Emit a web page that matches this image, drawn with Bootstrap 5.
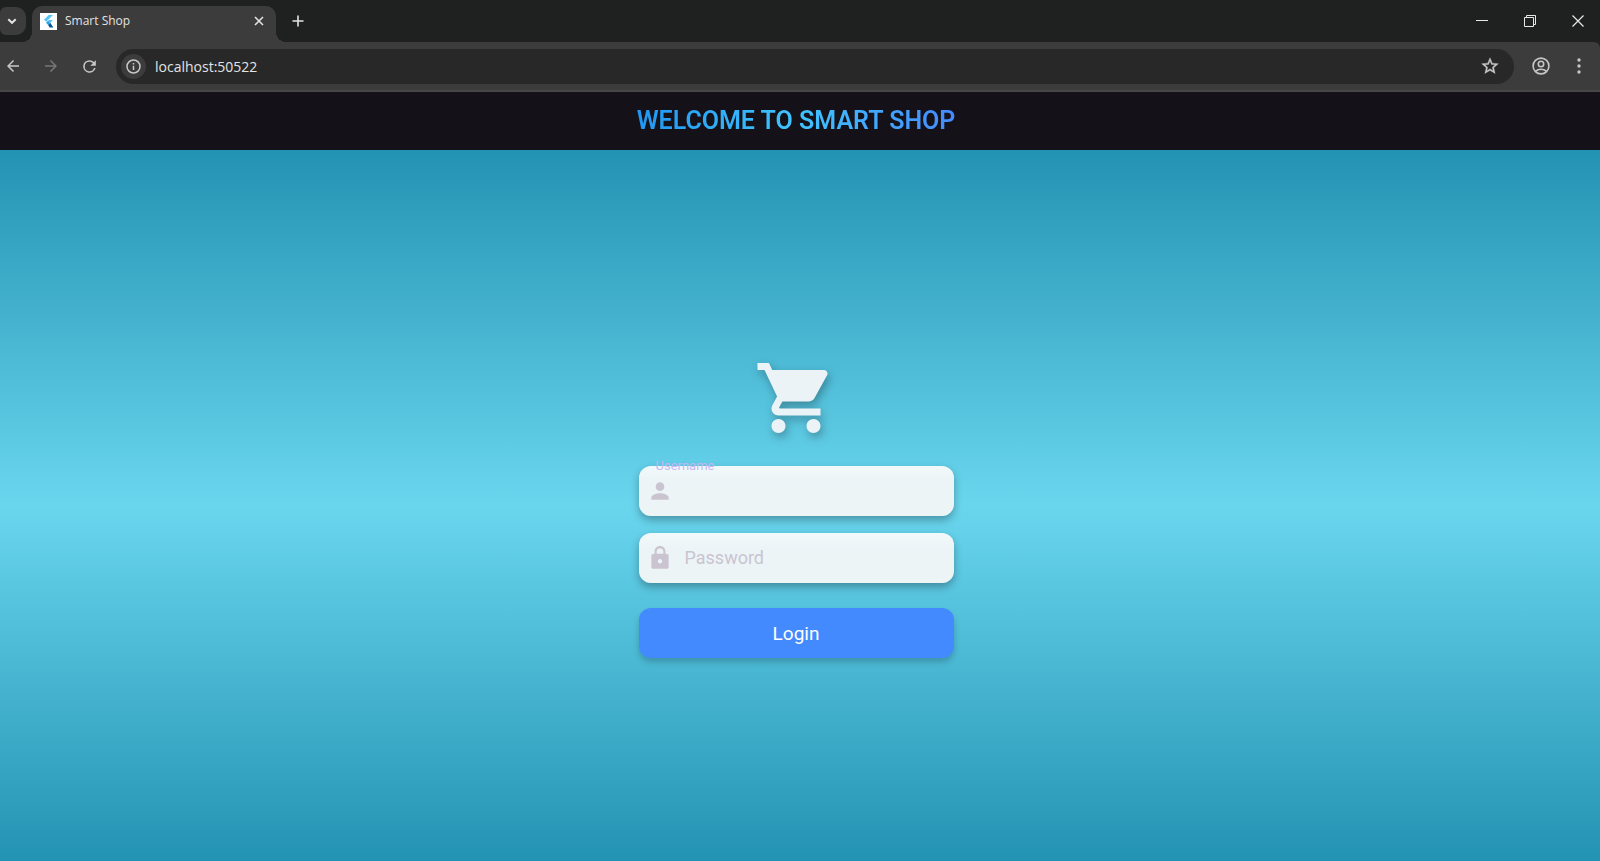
<!DOCTYPE html>
<html lang="en">
<head>
<meta charset="utf-8">
<meta name="viewport" content="width=device-width, initial-scale=1">
<title>Smart Shop</title>
<link href="https://cdn.jsdelivr.net/npm/bootstrap@5.3.0/dist/css/bootstrap.min.css" rel="stylesheet">
<style>
  body { font-family: Roboto, "Liberation Sans", sans-serif; background: #2393b3; }
  svg { display: block; flex: none; }
  .chrome { font-family: "Open Sans", "Noto Sans", sans-serif; color: #e3e3e3; background: #1f2120; }
  .icon-btn { border: 0; padding: 0; background: none; color: #c7c7c7; display: flex; align-items: center; justify-content: center; }

  .tab-strip { height: 42px; padding-top: 6px; }
  .tab-search { width: 26px; height: 28px; margin-top: 1px; padding-right: 2px; background: #3c3c3c; border-radius: 6px 10px 10px 6px; color: #e3e3e3; }
  .tab-item { width: 244px; height: 36px; margin-left: 6px; padding: 0 8px 6px; background: #3c3c3c; border-radius: 10px 10px 0 0; font-size: 12px; position: relative; }
  .tab-item::before, .tab-item::after { content: ""; position: absolute; bottom: 0; width: 10px; height: 10px; }
  .tab-item::before { left: -10px; background: radial-gradient(circle at 0 0, transparent 10px, #3c3c3c 10px); }
  .tab-item::after { right: -10px; background: radial-gradient(circle at 100% 0, transparent 10px, #3c3c3c 10px); }
  .tab-title { color: #e3e3e3; text-decoration: none; }
  .new-tab { height: 30px; }
  .window-btns { margin-right: -2px; }
  .window-btn { width: 48px; height: 29px; color: #e8e8e8; }

  .toolbar { height: 50px; background: #3c3c3c; border-bottom: 2px solid #474747; border-top-right-radius: 6px; padding-right: 2px; }
  .nav-btn { width: 38px; height: 34px; }
  .back-btn { width: 32px; padding-right: 6px; }
  .forward-btn { color: #777; }
  .address { height: 35px; margin-left: 8px; padding: 0 14px 0 5px; background: #282828; border-radius: 18px; }
  .site-info { width: 25px; height: 25px; border-radius: 50%; background: #3c3c3c; }
  .address-input { border: 0; outline: 0; padding: 0 0 0 9px; background: none; color: #e3e3e3; font-size: 14px; min-width: 0; }

  .app-bar { height: 58px; background: #141218; padding-right: 8px; }
  .app-title { font-size: 25px; line-height: 32px; font-weight: 600; color: transparent;
    background: linear-gradient(90deg, #2196f3, #40c4ff 50%, #448aff); -webkit-background-clip: text; background-clip: text; }

  .app-body { padding: 2px 8px 0 0; background: linear-gradient(#2393b3, #6ad6ee 50%, #2393b3); }
  .login-form { width: 315px; }
  .cart { margin-bottom: 26px; filter: drop-shadow(2px 4px 5px rgba(0,0,0,.3)); }
  .field { height: 50px; padding: 0 12px 0 8px; border-radius: 12px; background: linear-gradient(#f2f9fb, #ecf4f7 30%, #ecf4f6); box-shadow: 0 4px 8px rgba(0,0,0,.3); color: #cac4d0; position: relative; }
  .field + .field { margin-top: 17px; }
  .field-label { font-size: 18px; padding-left: 12px; }
  .field-input { border: 0; outline: 0; background: none; padding: 0 0 0 12px; min-width: 0; font-size: 18px; color: #49454f; }
  .float-label { position: absolute; left: 17px; top: -8px; font-size: 13px; line-height: 16px; color: #c6b8f2; }
  .login-btn { height: 50px; margin-top: 25px; padding-top: 4px; border: 0; border-radius: 12px; background: #448aff; color: #fff; font-size: 19px; box-shadow: 0 4px 6px rgba(0,0,0,.2); }
</style>
</head>
<body>
<div class="d-flex flex-column min-vh-100">
  <header class="chrome">
    <div class="tab-strip d-flex">
      <button class="icon-btn tab-search" aria-label="Search tabs">
        <svg width="12" height="12" viewBox="0 0 12 12" fill="none" stroke="currentColor" stroke-width="2"><path d="M2.3 4.2 6 7.8l3.7-3.6"/></svg>
      </button>
      <div class="tab-item d-flex align-items-center">
        <svg width="17" height="17" viewBox="0 0 17 17"><path fill="#fff" d="M0 0h17v17H0z"/><path fill="#54c5f8" d="M8.700 2h4.300L6.200 8.800 4 6.700zM8.900 6.900H13L10.200 9.700 8.100 7.700z"/><path fill="#29a4ed" d="m8.100 7.700 2.100 2.100-2.100 2.100L6 9.800z"/><path fill="#01579b" d="m8.100 11.900 2.100-2.100 3.200 4.700H9.700z"/></svg>
        <a class="tab-title flex-grow-1 ms-2" href="#">Smart Shop</a>
        <button class="icon-btn p-1" aria-label="Close tab">
          <svg width="10" height="10" viewBox="0 0 10 10" fill="none" stroke="#e3e3e3" stroke-width="1.600"><path d="m1 1 8 8M9 1 1 9"/></svg>
        </button>
      </div>
      <button class="icon-btn new-tab ms-3" aria-label="New tab">
        <svg width="12" height="12" viewBox="0 0 12 12" fill="none" stroke="#e3e3e3" stroke-width="1.600"><path d="M6 .5v11M.5 6h11"/></svg>
      </button>
      <div class="window-btns d-flex ms-auto">
        <button class="icon-btn window-btn" aria-label="Minimize"><svg width="12" height="12" viewBox="0 0 12 12" stroke="currentColor"><path d="M0 5.500h12"/></svg></button>
        <button class="icon-btn window-btn" aria-label="Restore"><svg width="12" height="12" viewBox="0 0 12 12" fill="none" stroke="currentColor"><path d="M.5 2.500h9v9h-9zM2.500 2.500V.5h9v9h-2"/></svg></button>
        <button class="icon-btn window-btn" aria-label="Close"><svg width="12" height="12" viewBox="0 0 12 12" fill="none" stroke="currentColor" stroke-width="1.200"><path d="m.5.5 11 11M11.500.5l-11 11"/></svg></button>
      </div>
    </div>
    <div class="toolbar d-flex align-items-center">
      <button class="icon-btn back-btn" aria-label="Back"><svg width="18" height="18" viewBox="0 0 24 24" fill="currentColor"><path d="M20 11H7.830l5.590-5.590L12 4l-8 8 8 8 1.410-1.410L7.830 13H20z"/></svg></button>
      <button class="icon-btn nav-btn forward-btn" aria-label="Forward"><svg width="18" height="18" viewBox="0 0 24 24" fill="currentColor"><path d="m12 4-1.410 1.410L16.170 11H4v2h12.170l-5.580 5.590L12 20l8-8z"/></svg></button>
      <button class="icon-btn nav-btn" aria-label="Reload"><svg width="19" height="19" viewBox="0 0 24 24" fill="currentColor"><path d="M17.650 6.350A7.960 7.960 0 0 0 12 4a8 8 0 1 0 7.730 10h-2.080A6 6 0 1 1 12 6c1.660 0 3.140.69 4.220 1.780L13 11h7V4z"/></svg></button>
      <div class="address d-flex align-items-center flex-grow-1">
        <button class="icon-btn site-info" aria-label="Site information"><svg width="15" height="15" viewBox="0 0 15 15" fill="none" stroke="currentColor" stroke-width="1.500"><circle cx="7.500" cy="7.500" r="6.500"/><path d="M7.500 6.700V11M7.500 4v1.600"/></svg></button>
        <input class="address-input flex-grow-1" type="text" value="localhost:50522" aria-label="Address">
        <button class="icon-btn" aria-label="Bookmark"><svg width="20" height="20" viewBox="0 0 24 24" fill="currentColor" stroke="currentColor" stroke-width=".4"><path d="m22 9.240-7.190-.62L12 2 9.190 8.630 2 9.240l5.460 4.730L5.820 21 12 17.270 18.180 21l-1.630-7.030zM12 15.400l-3.760 2.270 1-4.280-3.320-2.880 4.380-.38L12 6.100l1.710 4.040 4.380.38-3.320 2.880 1 4.280z"/></svg></button>
      </div>
      <button class="icon-btn nav-btn ms-2" aria-label="Profile"><svg width="18" height="18" viewBox="0 0 18 18" fill="none" stroke="currentColor" stroke-width="1.600"><circle cx="9" cy="9" r="7.900"/><circle cx="9" cy="7" r="2.700"/><path d="M3.500 14.300c3-2.700 8-2.700 11 0"/></svg></button>
      <button class="icon-btn nav-btn" aria-label="Menu"><svg width="4" height="16" viewBox="0 0 4 16" fill="currentColor"><circle cx="2" cy="2" r="1.700"/><circle cx="2" cy="8" r="1.700"/><circle cx="2" cy="14" r="1.700"/></svg></button>
    </div>
  </header>

  <div class="app-bar d-flex align-items-center justify-content-center">
    <h1 class="app-title m-0">WELCOME TO SMART SHOP</h1>
  </div>

  <main class="app-body flex-grow-1 d-flex align-items-center justify-content-center">
    <form class="login-form d-flex flex-column">
      <svg class="cart align-self-center" width="84" height="84" viewBox="0 0 24 24" fill="#ecf3f6"><path d="M7 18c-1.100 0-1.990.9-1.990 2S5.900 22 7 22s2-.9 2-2-.9-2-2-2zM1 2v2h2l3.600 7.590-1.350 2.450c-.16.28-.25.61-.25.96 0 1.100.9 2 2 2h12v-2H7.420c-.14 0-.25-.11-.25-.25l.03-.12.900-1.630h7.450c.75 0 1.410-.41 1.750-1.030l3.580-6.490c.08-.14.12-.31.12-.48 0-.55-.45-1-1-1H5.210l-.94-2H1zm16 16c-1.100 0-1.990.9-1.990 2s.89 2 1.990 2 2-.9 2-2-.9-2-2-2z"/></svg>
      <div class="field d-flex align-items-center">
        <label class="float-label" for="username">Username</label>
        <svg width="26" height="26" viewBox="0 0 24 24" fill="currentColor"><path d="M12 12c2.210 0 4-1.790 4-4s-1.790-4-4-4-4 1.790-4 4 1.790 4 4 4zm0 2c-2.670 0-8 1.340-8 4v2h16v-2c0-2.660-5.330-4-8-4z"/></svg>
        <input class="field-input flex-grow-1" id="username" type="text">
      </div>
      <div class="field d-flex align-items-center">
        <svg width="26" height="26" viewBox="0 0 24 24" fill="currentColor"><path d="M18 8h-1V6c0-2.760-2.240-5-5-5S7 3.240 7 6v2H6c-1.100 0-2 .9-2 2v10c0 1.100.9 2 2 2h12c1.100 0 2-.9 2-2V10c0-1.100-.9-2-2-2zm-6 9c-1.100 0-2-.9-2-2s.9-2 2-2 2 .9 2 2-.9 2-2 2zm3.100-9H8.900V6c0-1.710 1.390-3.100 3.100-3.100s3.100 1.390 3.100 3.100z"/></svg>
        <label class="field-label" for="password">Password</label>
        <input class="field-input flex-grow-1" id="password" type="password">
      </div>
      <button class="login-btn" type="button">Login</button>
    </form>
  </main>
</div>
<script src="https://cdn.jsdelivr.net/npm/bootstrap@5.3.0/dist/js/bootstrap.bundle.min.js"></script>
</body>
</html>
